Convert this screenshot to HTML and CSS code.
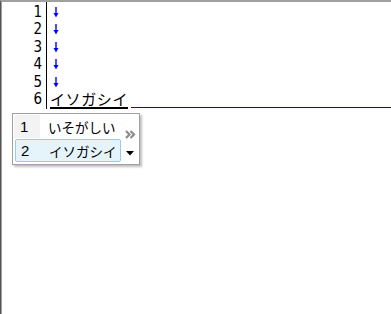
FILE: index.html
```html
<!DOCTYPE html>
<html lang="ja">
<head>
    <meta charset="UTF-8">
    <title>IME</title>
    <link rel="stylesheet" href="styles.css">
</head>
<body>
    <div class="editor">
        <div class="gutter">
            <div class="num">1</div>
            <div class="num">2</div>
            <div class="num">3</div>
            <div class="num">4</div>
            <div class="num">5</div>
            <div class="num">6</div>
        </div>
        <div class="text">
            <div class="line"><svg class="eol" width="6" height="11" viewBox="0 0 6 11"><path d="M3 0V7" stroke="#0000ff" stroke-width="1.4"/><path d="M0.5 6H5.5L3 10.5Z" fill="#0000ff"/></svg></div>
            <div class="line"><svg class="eol" width="6" height="11" viewBox="0 0 6 11"><path d="M3 0V7" stroke="#0000ff" stroke-width="1.4"/><path d="M0.5 6H5.5L3 10.5Z" fill="#0000ff"/></svg></div>
            <div class="line"><svg class="eol" width="6" height="11" viewBox="0 0 6 11"><path d="M3 0V7" stroke="#0000ff" stroke-width="1.4"/><path d="M0.5 6H5.5L3 10.5Z" fill="#0000ff"/></svg></div>
            <div class="line"><svg class="eol" width="6" height="11" viewBox="0 0 6 11"><path d="M3 0V7" stroke="#0000ff" stroke-width="1.4"/><path d="M0.5 6H5.5L3 10.5Z" fill="#0000ff"/></svg></div>
            <div class="line"><svg class="eol" width="6" height="11" viewBox="0 0 6 11"><path d="M3 0V7" stroke="#0000ff" stroke-width="1.4"/><path d="M0.5 6H5.5L3 10.5Z" fill="#0000ff"/></svg></div>
            <div class="line last"><span class="compose">イソガシイ</span><span class="caret-line"></span></div>
        </div>

        <div class="candidates">
            <div class="list">
                <div class="cand">
                    <span class="idx">1</span>
                    <span class="word">いそがしい</span>
                </div>
                <div class="cand selected">
                    <span class="idx">2</span>
                    <span class="word">イソガシイ</span>
                </div>
            </div>
            <div class="side">
                <svg class="more" width="11" height="9" viewBox="0 0 11 9">
                    <path d="M1 1L4.5 4.5L1 8M5.5 1L9 4.5L5.5 8" fill="none" stroke="#8c8c8c" stroke-width="2.2"/>
                </svg>
                <svg class="down" width="8" height="5" viewBox="0 0 8 5">
                    <path d="M0 0H8L4 4.5Z" fill="#000"/>
                </svg>
            </div>
        </div>
    </div>
</body>
</html>
```

FILE: styles.css
```css
html, body {
    margin: 0;
    padding: 0;
    background: #fff;
}
.editor {
    position: relative;
    display: flex;
    height: 312px;
    border-top: 2px solid #a0a0a0;
    border-left: 1px solid #555;
    box-shadow: inset 1px 0 0 #a0a0a0;
    font-family: "Noto Sans CJK JP", sans-serif;
}
.gutter {
    width: 41px;
    padding: 1px 4px 0 0;
    height: 106px;
    border-right: 1px solid #000;
    font-family: "DejaVu Sans Condensed", "Liberation Sans", sans-serif;
    font-size: 15px;
    text-align: right;
}
.num {
    height: 18px;
    line-height: 18px;
}
.num:nth-child(even) {
    height: 17px;
    line-height: 17px;
}
.text {
    flex: 1;
    padding-top: 1px;
}
.line {
    height: 18px;
    display: flex;
    align-items: center;
    padding-left: 6px;
}
.line:nth-child(even) {
    height: 17px;
}
.eol {
    display: block;
}
.line.last {
    padding-left: 3px;
    align-items: flex-end;
    height: 18px;
}
.compose {
    font-size: 15px;
    line-height: 16px;
    border-bottom: 2px solid #000;
    letter-spacing: 0.6px;
    white-space: nowrap;
}
.caret-line {
    flex: 1;
    margin-left: 3px;
    height: 0;
    border-top: 1px solid blue;
    align-self: flex-end;
    margin-bottom: 1px;
}
.candidates {
    position: absolute;
    left: 11px;
    top: 111px;
    width: 125px;
    height: 50px;
    border: 1px solid #a0a0a0;
    background: #fff;
    box-shadow: 2px 2px 2px rgba(0, 0, 0, 0.25);
    display: flex;
    padding: 0 0 0 1px;
}
.list {
    width: 107px;
    flex-shrink: 0;
    display: flex;
    flex-direction: column;
    padding-top: 1px;
}
.cand {
    height: 23px;
    display: flex;
    align-items: center;
    font-size: 13px;
    white-space: nowrap;
}
.idx {
    width: 26px;
    flex-shrink: 0;
    height: 100%;
    display: flex;
    align-items: center;
    padding-left: 6px;
    box-sizing: border-box;
    background: #f3f3f3;
    font-family: "Liberation Sans", sans-serif;
    font-size: 15px;
}
.word {
    padding-left: 8px;
    font-size: 13.5px;
}
.cand.selected {
    margin: 1px 0 0 1px;
    height: 21px;
    border: 1px solid #8fcdf1;
    border-radius: 2px;
    background: #e5f3fb;
}
.cand.selected .idx {
    background: transparent;
    padding-left: 5px;
}
.cand.selected .word {
    padding-left: 7px;
}
.side {
    flex: 1;
    display: flex;
    flex-direction: column;
    align-items: center;
    padding-top: 16px;
}
.more {
    display: block;
}
.down {
    display: block;
    margin-top: 12px;
}
```
